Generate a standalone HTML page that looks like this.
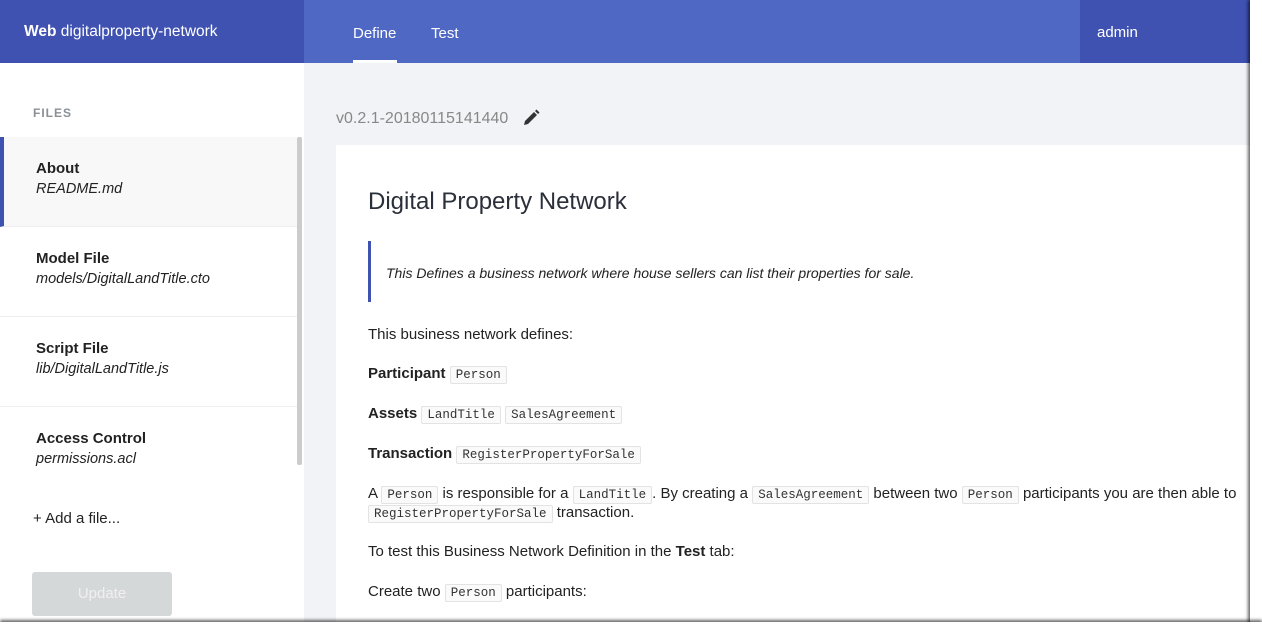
<!DOCTYPE html>
<html><head><style>
*{margin:0;padding:0;box-sizing:border-box}
body{width:1262px;height:634px;overflow:hidden;background:#fff;font-family:"Liberation Sans",sans-serif;position:relative;color:#222}
.a{position:absolute}
.hdr{top:0;height:63px;}
code{font-family:"Liberation Mono",monospace;font-size:12.5px;border:1px solid #e3e3e3;background:#fafafa;padding:1px 5px;color:#333;border-radius:2px}
.p{left:368px;font-size:15px;white-space:nowrap;color:#222}
b{font-weight:bold}
.it{left:0;width:297px;height:90px;border-bottom:1px solid #eee}
.it .t{position:absolute;left:36px;top:23px;font-size:15px;font-weight:bold;color:#222}
.it .s{position:absolute;left:36px;top:44px;font-size:14.5px;font-style:italic;color:#222}
</style></head><body>
<div class="a hdr" style="left:0;width:304px;background:#3f51b1"></div>
<div class="a hdr" style="left:304px;width:776px;background:#4f68c4"></div>
<div class="a hdr" style="left:1080px;width:172px;background:#3f51b1"></div>
<div class="a" style="left:24px;top:23px;color:#fff;font-size:15.5px"><b>Web</b> digitalproperty-network</div>
<div class="a" style="left:353px;top:25px;color:#fff;font-size:15px">Define</div>
<div class="a" style="left:353px;top:60px;width:44px;height:3px;background:#fff"></div>
<div class="a" style="left:431px;top:25px;color:#fff;font-size:15px">Test</div>
<div class="a" style="left:1097px;top:24px;color:#fff;font-size:15px">admin</div>

<div class="a" style="left:0;top:63px;width:304px;height:560px;background:#fff;box-shadow:1px 0 2px rgba(0,0,0,.08)"></div>
<div class="a" style="left:304px;top:63px;width:946px;height:560px;background:#f2f3f7"></div>
<div class="a" style="left:33px;top:106px;font-size:12px;font-weight:bold;color:#8a9095;letter-spacing:1px">FILES</div>
<div class="a it" style="top:137px;background:#f8f8f8;border-left:4px solid #3f51b1"><div class="t" style="left:32px">About</div><div class="s" style="left:32px">README.md</div></div>
<div class="a it" style="top:227px"><div class="t">Model File</div><div class="s">models/DigitalLandTitle.cto</div></div>
<div class="a it" style="top:317px"><div class="t">Script File</div><div class="s">lib/DigitalLandTitle.js</div></div>
<div class="a it" style="top:407px;border:none"><div class="t">Access Control</div><div class="s">permissions.acl</div></div>
<div class="a" style="left:297px;top:137px;width:5px;height:328px;background:#ccc;border-radius:2px"></div>
<div class="a" style="left:33px;top:510px;font-size:15px;color:#222">+ Add a file...</div>
<div class="a" style="left:32px;top:572px;width:140px;height:44px;background:#d5d8d8;border-radius:3px;color:#f0f0f0;font-size:15px;text-align:center;line-height:44px">Update</div>

<div class="a" style="left:336px;top:110px;font-size:16px;color:#888">v0.2.1-20180115141440</div>
<svg class="a" style="left:522px;top:109px" width="18" height="18" viewBox="0 0 18 18"><path d="M2 16l1-4 9-9 3 3-9 9z M13 2l1.5-1.5 3 3L16 5z" fill="#333"/></svg>
<div class="a" style="left:336px;top:145px;width:914px;height:478px;background:#fff"></div>
<div class="a" style="left:368px;top:188px;font-size:24px;color:#2a2f3a">Digital Property Network</div>
<div class="a" style="left:368px;top:241px;width:3px;height:61px;background:#3f51b1"></div>
<div class="a p" style="left:386px;top:265px;font-style:italic;font-size:14px">This Defines a business network where house sellers can list their properties for sale.</div>
<div class="a p" style="top:326px">This business network defines:</div>
<div class="a p" style="top:365px"><b>Participant</b> <code>Person</code></div>
<div class="a p" style="top:405px"><b>Assets</b> <code>LandTitle</code> <code>SalesAgreement</code></div>
<div class="a p" style="top:445px"><b>Transaction</b> <code>RegisterPropertyForSale</code></div>
<div class="a p" style="top:485px">A <code>Person</code> is responsible for a <code>LandTitle</code>. By creating a <code>SalesAgreement</code> between two <code>Person</code> participants you are then able to</div>
<div class="a p" style="top:504px"><code>RegisterPropertyForSale</code> transaction.</div>
<div class="a p" style="top:543px">To test this Business Network Definition in the <b>Test</b> tab:</div>
<div class="a p" style="top:583px">Create two <code>Person</code> participants:</div>

<div class="a" style="left:1250px;top:0;width:12px;height:634px;background:#fff;box-shadow:-2px 0 3px rgba(0,0,0,.6)"></div>
<div class="a" style="left:0;top:622px;width:1262px;height:12px;background:#fff;box-shadow:0 -2px 3px rgba(0,0,0,.6)"></div>
</body></html>
